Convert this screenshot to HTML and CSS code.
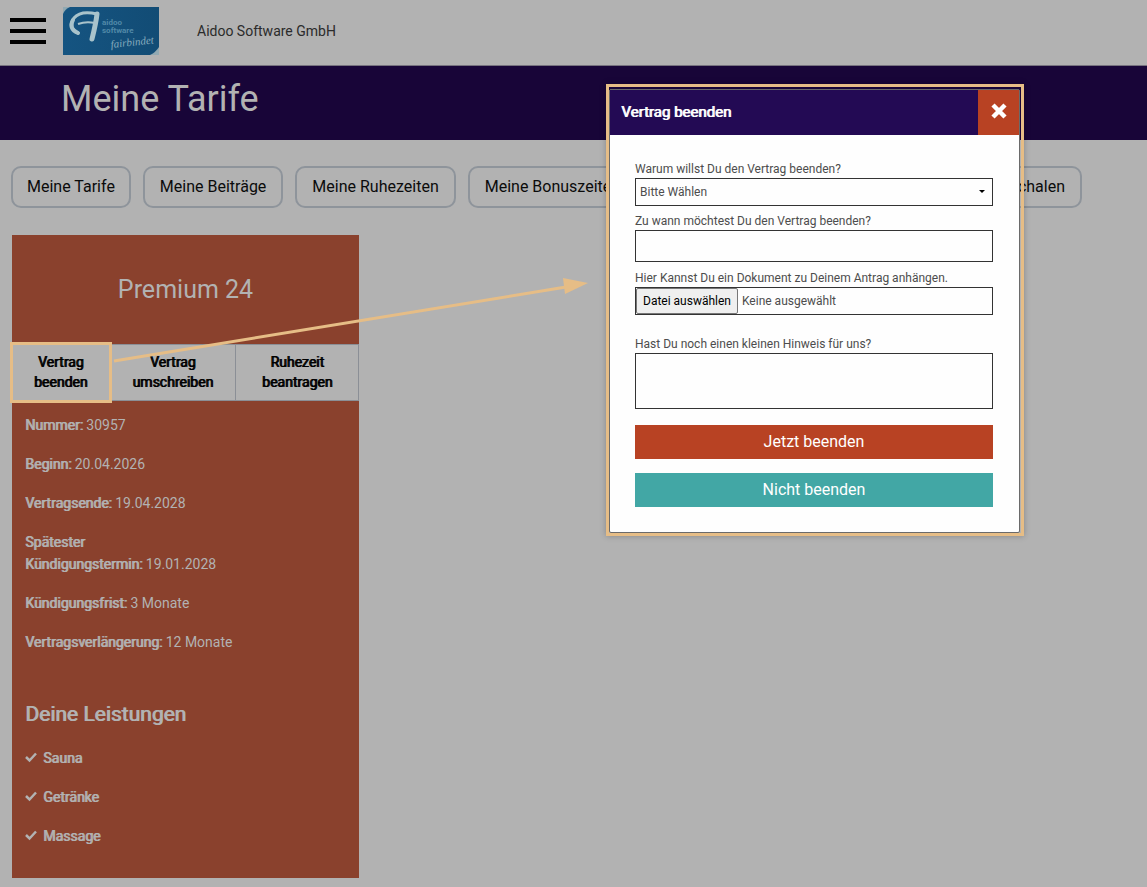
FILE: index.html
```html
<!DOCTYPE html>
<html lang="de">
<head>
<meta charset="utf-8">
<meta name="viewport" content="width=device-width, initial-scale=1">
<title>Meine Tarife</title>
<link rel="stylesheet" href="styles.css">
</head>
<body>
<header class="topbar">
  <button class="menu" type="button" aria-label="Menü"><span></span><span></span><span></span></button>
  <svg class="logo" viewBox="0 0 96 48" role="img" aria-label="aidoo software">
    <defs><linearGradient id="sky" x1="0" y1="0" x2="1" y2="0"><stop offset="0" stop-color="#155481"/><stop offset="1" stop-color="#124c75"/></linearGradient></defs>
    <rect width="96" height="48" fill="#92a9b2"/>
    <path d="M7 0H96V40Q93 45 87 48H0V7Q2 2 7 0Z" fill="url(#sky)"/>
    <path d="M15 26C8 23 7 16 11 11C16 5 26 5 34 7" fill="none" stroke="#a9c3cb" stroke-width="3" stroke-linecap="round"/>
    <path d="M15 26C8 23 7 18 10 13" fill="none" stroke="#a9c3cb" stroke-width="4" stroke-linecap="round"/>
    <path d="M34 7C33 16 31 24 29 32" fill="none" stroke="#a9c3cb" stroke-width="5" stroke-linecap="round"/>
    <path d="M15 17Q23 14 32 16" fill="none" stroke="#a9c3cb" stroke-width="2"/>
    <text class="logo-name" x="39" y="18">aidoo</text>
    <text class="logo-name" x="39" y="26">software</text>
    <text class="logo-tag" x="48" y="41" transform="rotate(-6 48 41)">fairbindet</text>
  </svg>
  <span class="company">Aidoo Software GmbH</span>
</header>
<div class="banner"><h1>Meine Tarife</h1></div>
<nav class="tabs">
  <a href="#tarife">Meine Tarife</a>
  <a href="#beitraege">Meine Beiträge</a>
  <a href="#ruhezeiten">Meine Ruhezeiten</a>
  <a href="#bonuszeiten">Meine Bonuszeiten</a>
  <a class="last" href="#pauschalen">Meine Pauschalen</a>
</nav>
<main class="plans">
  <section class="plan">
    <h2>Premium 24</h2>
    <div class="actions">
      <button class="marked" type="button">Vertrag<br>beenden</button>
      <button type="button">Vertrag<br>umschreiben</button>
      <button type="button">Ruhezeit<br>beantragen</button>
    </div>
    <div class="details">
      <p><b>Nummer:</b> 30957</p>
      <p><b>Beginn:</b> 20.04.2026</p>
      <p><b>Vertragsende:</b> 19.04.2028</p>
      <p><b>Spätester<br>Kündigungstermin:</b> 19.01.2028</p>
      <p><b>Kündigungsfrist:</b> 3 Monate</p>
      <p><b>Vertragsverlängerung:</b> 12 Monate</p>
      <h3>Deine Leistungen</h3>
      <ul>
        <li><svg viewBox="0 0 12 12"><path d="M1 5L4.500 8.500L11 1.500"/></svg>Sauna</li>
        <li><svg viewBox="0 0 12 12"><path d="M1 5L4.500 8.500L11 1.500"/></svg>Getränke</li>
        <li><svg viewBox="0 0 12 12"><path d="M1 5L4.500 8.500L11 1.500"/></svg>Massage</li>
      </ul>
    </div>
  </section>
</main>
<svg class="pointer" viewBox="0 0 480 90" aria-hidden="true">
  <path d="M4 81L456 7" fill="none" stroke="#e6bd86" stroke-width="3"/>
  <path d="M453 -2L478 3L455 14Z" fill="#e6bd86"/>
</svg>
<div class="frame">
  <form class="dialog" role="dialog" aria-labelledby="dialog-title">
    <div class="dialog-head">
      <h2 id="dialog-title">Vertrag beenden</h2>
      <button class="close" type="button" aria-label="Schließen"><svg viewBox="0 0 18 18"><path d="M3 3L15 15M15 3L3 15"/></svg></button>
    </div>
    <div class="dialog-body">
      <label for="reason">Warum willst Du den Vertrag beenden?</label>
      <div class="select">
        <select id="reason"><option>Bitte Wählen</option></select>
        <svg viewBox="0 0 6 4"><path d="M0 0H6L3 3Z"/></svg>
      </div>
      <label for="date">Zu wann möchtest Du den Vertrag beenden?</label>
      <input class="field" id="date" type="text">
      <label for="file">Hier Kannst Du ein Dokument zu Deinem Antrag anhängen.</label>
      <div class="upload">
        <input id="file" type="file">
        <label class="pick" for="file">Datei auswählen</label>
        <span>Keine ausgewählt</span>
      </div>
      <label for="note">Hast Du noch einen kleinen Hinweis für uns?</label>
      <textarea class="field" id="note"></textarea>
      <button class="submit" type="submit">Jetzt beenden</button>
      <button class="submit cancel" type="button">Nicht beenden</button>
    </div>
  </form>
</div>
</body>
</html>
```
FILE: styles.css
```css
* { box-sizing: border-box; }
body {
  margin: 0;
  position: relative;
  background: #b2b2b2;
  color: #b2b2b2;
  font: 14px/22px Roboto, "Liberation Sans", sans-serif;
}
h1, h2, h3, p, ul { margin: 0; padding: 0; }
button, input, select, textarea { font: inherit; color: inherit; border-radius: 0; }
button { border: 0; padding: 0; cursor: pointer; }

/* Headings and labels are the regular cut, thickened by a one-pixel shadow. */
b, .actions button, .details h3, .details li, .dialog-head h2 {
  font-weight: 400;
  text-shadow: 1px 0 currentColor;
}

.topbar {
  display: flex;
  align-items: center;
  height: 66px;
  padding: 0 10px 4px;
  border-bottom: 1px solid #77737f;
}
.menu { display: grid; gap: 7px; width: 36px; background: none; }
.menu span { height: 4px; background: #000; }
.logo { width: 96px; height: 48px; margin: 0 38px 0 17px; }
.logo-name { font: 700 8px Roboto, sans-serif; fill: #5189a8; }
.logo-tag { font: italic 11px "Liberation Serif", serif; fill: #86abbd; }
.company { color: #2b2b2b; }

.banner { height: 74px; padding: 11px 61px; background: #180538; }
.banner h1 { font-size: 36px; line-height: 44px; font-weight: 400; }

.tabs { display: flex; gap: 12px; padding: 26px 65px 27px 11px; }
.tabs a {
  padding: 8px 14px;
  border: 2px solid #8e949b;
  border-radius: 10px;
  color: #0b0b0b;
  font-size: 16px;
  line-height: 22px;
  text-decoration: none;
  white-space: nowrap;
}
.tabs a:not(:first-child) { padding: 8px 15px; }
.tabs .last { margin-left: auto; }

.plans { display: flex; padding: 0 12px 9px; }
.plan { width: 347px; background: #8a412d; }
.plan h2 {
  padding: 38px 0;
  font-size: 25px;
  line-height: 33px;
  font-weight: 400;
  text-align: center;
}
.actions { display: grid; grid-template-columns: 98px 126px 123px; }
.actions button {
  padding: 7px 0 8px;
  border: solid #8b8f96;
  border-width: 1px 1px 1px 0;
  background: #b2b2b2;
  color: #000;
  line-height: 20px;
}
.actions .marked { outline: 3px solid #e6bd86; outline-offset: -1px; z-index: 1; }
.details { padding: 13px 13px 14px; }
.details p { margin-bottom: 17px; }
.details h3 { margin: 50px 0 22px; font-size: 21px; line-height: 22px; }
.details ul { list-style: none; }
.details li { display: flex; align-items: center; gap: 6px; margin-bottom: 17px; }
.details li svg { width: 12px; height: 12px; }
.details li path { fill: none; stroke: #b2b2b2; stroke-width: 2.500; }

.pointer { position: absolute; left: 110px; top: 280px; width: 480px; height: 90px; overflow: visible; }

.frame {
  position: absolute;
  top: 84px;
  right: 123px;
  width: 418px;
  padding: 2px 1px 0 0;
  border: 3px solid #e6bd86;
  box-shadow: 0 0 6px #00000040;
}
.dialog { border: 1px solid #6a6a6a; border-radius: 2px; background: #fefefe; color: #4d4d4d; }
.dialog-head { display: flex; justify-content: space-between; background: #230a54; color: #fff; }
.dialog-head h2 { padding: 12px 11px; font-size: 15px; line-height: 21px; }
.close { width: 41px; padding-bottom: 6px; background: #b84223; }
.close svg { width: 18px; height: 18px; vertical-align: middle; }
.close path { fill: none; stroke: #fff; stroke-width: 4.500; }
.dialog-body { display: grid; padding: 25px 26px 25px 25px; font-size: 12px; line-height: 18px; }
.select { display: grid; align-items: center; margin-bottom: 6px; }
.select > * { grid-area: 1 / 1; }
.select select {
  appearance: none;
  height: 28px;
  padding: 0 4px;
  border: 1px solid #333;
  background: #fefefe;
}
.select svg { justify-self: end; width: 6px; height: 4px; margin-right: 8px; pointer-events: none; }
.field { width: 100%; margin: 0 0 7px; border: 1px solid #333; background: #fefefe; }
input.field { height: 32px; }
textarea.field { height: 56px; margin-bottom: 16px; resize: none; }
.upload {
  display: flex;
  align-items: center;
  gap: 4px;
  height: 28px;
  margin-bottom: 20px;
  border: 1px solid #333;
}
.upload input { position: absolute; width: 1px; height: 1px; opacity: 0; }
.pick {
  padding: 3px 6px;
  border: 1px solid #777;
  border-radius: 2px;
  background: #efefef;
  color: #000;
}
.submit { height: 34px; margin-bottom: 14px; background: #b84223; color: #fff; font-size: 16px; }
.cancel { margin-bottom: 0; background: #42a7a5; }
```
